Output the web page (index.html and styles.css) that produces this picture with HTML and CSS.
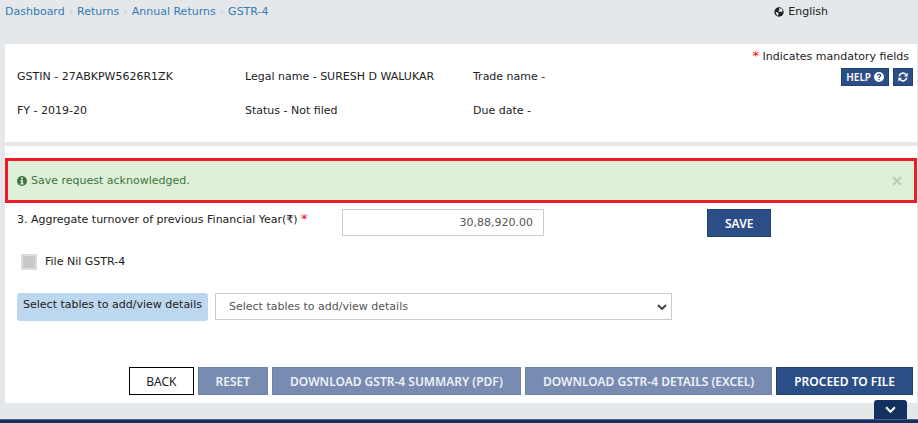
FILE: index.html
```html
<!DOCTYPE html>
<html lang="en">
<head>
    <meta charset="UTF-8">
    <meta name="viewport" content="width=device-width, initial-scale=1.0">
    <title>GSTR-4 Annual Return</title>
    <link rel="stylesheet" href="styles.css">
</head>
<body>
    <header class="topbar">
        <nav class="breadcrumb" aria-label="Breadcrumb">
            <a href="#">Dashboard</a>
            <span class="sep">›</span>
            <a href="#">Returns</a>
            <span class="sep">›</span>
            <a href="#">Annual Returns</a>
            <span class="sep">›</span>
            <a href="#">GSTR-4</a>
        </nav>
        <div class="language">
            <svg class="icon" viewBox="0 0 16 16" aria-hidden="true">
                <circle cx="8" cy="8" r="7.500" fill="#222"/>
                <path d="M8 2l4 0.500 2 3.500-1.500 2-2.500-1-1.500 1-1.500-1.500 1.500-2z" fill="#e4e8ea"/>
                <path d="M2.500 8l3 0.500 2 2-1.500 3.500-1.500-1z" fill="#e4e8ea"/>
            </svg>
            <span>English</span>
        </div>
    </header>

    <main class="content">
        <section class="panel summary">
            <dl class="details">
                <div><dt>GSTIN -</dt> <dd>27ABKPW5626R1ZK</dd></div>
                <div><dt>Legal name -</dt> <dd>SURESH D WALUKAR</dd></div>
                <div><dt>Trade name -</dt> <dd></dd></div>
                <div><dt>FY -</dt> <dd>2019-20</dd></div>
                <div><dt>Status -</dt> <dd>Not filed</dd></div>
                <div><dt>Due date -</dt> <dd></dd></div>
            </dl>
            <div class="summary-side">
                <p class="mandatory"><span class="required">*</span> Indicates mandatory fields</p>
                <div class="tools">
                    <button type="button" class="btn-small">HELP
                        <svg class="icon" viewBox="0 0 16 16" aria-hidden="true">
                            <circle cx="8" cy="8" r="8" fill="#fff"/>
                            <path d="M5.500 6c0-3.500 5-3.500 5-0.500 0 2-2.500 2-2.500 4" fill="none" stroke="#2c4e86" stroke-width="2"/>
                            <path d="M7 11h2v2h-2z" fill="#2c4e86"/>
                        </svg>
                    </button>
                    <button type="button" class="btn-small" aria-label="Refresh">
                        <svg class="icon" viewBox="0 0 16 16" aria-hidden="true">
                            <path d="M2 7a6 6 0 0 1 10.500-3M14 9a6 6 0 0 1-10.500 3" fill="none" stroke="#fff" stroke-width="2.500"/>
                            <path d="M15.500 1v6h-6zM0.500 15v-6h6z" fill="#fff"/>
                        </svg>
                    </button>
                </div>
            </div>
        </section>

        <section class="panel return">
            <div class="alert" role="alert">
                <svg class="icon" viewBox="0 0 16 16" aria-hidden="true">
                    <circle cx="8" cy="8" r="8" fill="#3c763d"/>
                    <path d="M6.500 2.500h3v2.500h-3zM5.500 6.500h4v5h1v2h-5v-2h1v-3h-1z" fill="#dff0d8"/>
                </svg>
                <span class="alert-text">Save request acknowledged.</span>
                <button type="button" class="close" aria-label="Close">
                    <svg viewBox="0 0 10 10" aria-hidden="true">
                        <path d="M1 1l8 8M9 1l-8 8" fill="none" stroke="#b9cfb4" stroke-width="2"/>
                    </svg>
                </button>
            </div>

            <form class="return-form">
                <div class="turnover-row">
                    <label for="turnover">3. Aggregate turnover of previous Financial Year(₹) <span class="required">*</span></label>
                    <input type="text" id="turnover" class="field amount" value="30,88,920.00">
                    <button type="button" class="btn btn-primary save">SAVE</button>
                </div>

                <div class="nil-row">
                    <input type="checkbox" id="nil" class="check" disabled>
                    <label for="nil">File Nil GSTR-4</label>
                </div>

                <div class="tables-row">
                    <label for="tables" class="tables-label">Select tables to add/view details</label>
                    <div class="select-wrap">
                        <select id="tables" class="field">
                            <option>Select tables to add/view details</option>
                        </select>
                        <svg class="chevron" viewBox="0 0 10 6" aria-hidden="true">
                            <path d="M1 1l4 4 4-4" fill="none" stroke="#444" stroke-width="2"/>
                        </svg>
                    </div>
                </div>

                <div class="actions">
                    <button type="button" class="btn btn-default">BACK</button>
                    <button type="button" class="btn btn-primary" disabled>RESET</button>
                    <button type="button" class="btn btn-primary" disabled>DOWNLOAD GSTR-4 SUMMARY (PDF)</button>
                    <button type="button" class="btn btn-primary" disabled>DOWNLOAD GSTR-4 DETAILS (EXCEL)</button>
                    <button type="button" class="btn btn-primary">PROCEED TO FILE</button>
                </div>
            </form>
        </section>
    </main>

    <footer class="footer">
        <button type="button" class="footer-toggle" aria-label="Show footer">
            <svg viewBox="0 0 10 6" aria-hidden="true">
                <path d="M1 1l4 4 4-4" fill="none" stroke="#fff" stroke-width="2"/>
            </svg>
        </button>
    </footer>
</body>
</html>
```

FILE: styles.css
```css
* {
    box-sizing: border-box;
}
body {
    margin: 0;
    background-color: #e4e8ea;
    color: #222;
    font-family: Verdana, "DejaVu Sans", sans-serif;
    font-size: 11px;
    line-height: 16px;
}
a {
    color: #337ab7;
    text-decoration: none;
}
p, dl, dd {
    margin: 0;
}
button, input, select {
    font-family: inherit;
    font-size: 11px;
}
button {
    cursor: pointer;
}
.icon {
    width: 10px;
    height: 10px;
    flex: none;
}
.required {
    color: #f00;
    font-size: 13px;
    line-height: 1;
}
.topbar {
    display: flex;
    justify-content: space-between;
    padding: 4px 90px 24px 5px;
}
.breadcrumb {
    display: flex;
    gap: 4px;
}
.sep {
    color: #c4c8cc;
}
.language {
    display: flex;
    align-items: center;
    gap: 4px;
}
.content {
    display: flex;
    flex-direction: column;
    gap: 4px;
    padding: 0 1px 0 5px;
}
.panel {
    background-color: #fff;
}

/* Taxpayer details */
.summary {
    display: flex;
    justify-content: space-between;
    padding: 5px 4px 23px 12px;
}
.details {
    flex: 1;
    display: grid;
    grid-template-columns: repeat(3, 1fr);
    row-gap: 18px;
    padding-top: 20px;
}
.details dt, .details dd {
    display: inline;
}
.summary-side {
    display: flex;
    flex-direction: column;
    align-items: flex-end;
    width: 212px;
    gap: 3px;
}
.mandatory {
    padding-right: 4px;
}
.tools {
    display: flex;
    gap: 4px;
}
.btn-small {
    display: flex;
    align-items: center;
    gap: 3px;
    height: 18px;
    padding: 0 4px;
    border: 1px solid #234170;
    background-color: #2c4e86;
    color: #fff;
    font-family: "Noto Sans", sans-serif;
    font-size: 10px;
    font-weight: 600;
}

/* Saved message */
.return {
    padding-top: 12px;
}
.alert {
    display: flex;
    align-items: center;
    gap: 4px;
    padding: 12px 9px 11px;
    border: 3px solid #ed1c24;
    background-color: #dff0d8;
    color: #3c763d;
}
.alert-text {
    flex: 1;
}
.close {
    display: flex;
    padding: 0 3px;
    border: none;
    background: none;
}
.close svg {
    width: 10px;
    height: 10px;
}

/* Return form */
.return-form {
    padding: 6px 4px 8px 12px;
}
.field {
    width: 100%;
    height: 27px;
    border: 1px solid #ccc;
    border-radius: 0;
    background-color: #fff;
    color: #555;
}
.turnover-row {
    display: grid;
    grid-template-columns: 325fr 202fr 369fr;
    align-items: start;
}
.turnover-row label {
    padding-top: 3px;
}
.amount {
    padding: 0 10px;
    text-align: right;
}
.save {
    justify-self: start;
    margin-left: 163px;
}
.nil-row {
    display: flex;
    align-items: center;
    gap: 8px;
    margin-top: 17px;
    padding-left: 4px;
}
.check {
    appearance: none;
    width: 16px;
    height: 16px;
    margin: 0;
    border: 2px solid #ddd;
    background-color: #c8c8c8;
}
.tables-row {
    display: flex;
    gap: 7px;
    margin-top: 23px;
}
.tables-label {
    min-width: 191px;
    height: 28px;
    padding: 4px;
    border-radius: 3px;
    background-color: #bdd7ee;
    text-align: center;
    white-space: nowrap;
}
.select-wrap {
    display: grid;
    align-items: center;
    width: 51%;
    height: 27px;
}
.select-wrap .field, .select-wrap .chevron {
    grid-area: 1 / 1;
}
.select-wrap .field {
    appearance: none;
    padding: 0 13px;
}
.chevron {
    justify-self: end;
    width: 10px;
    height: 6px;
    margin-right: 5px;
    pointer-events: none;
}
.btn {
    height: 28px;
    padding: 0 16px;
    border: 1px solid #234170;
    font-family: "Noto Sans", sans-serif;
    font-size: 12px;
    font-weight: 600;
    white-space: nowrap;
}
.btn-primary {
    padding: 0 17px;
    background-color: #2c4e86;
    color: #fff;
}
.btn-primary:disabled {
    border-color: #7083a4;
    background-color: #788cb2;
    color: #eef1f6;
    cursor: default;
}
.btn-default {
    border-color: #000;
    background-color: #fff;
    color: #222;
    font-weight: 400;
}
.actions {
    display: flex;
    justify-content: flex-end;
    gap: 4px;
    margin-top: 46px;
}

/* Footer */
.footer {
    display: flex;
    flex-direction: column;
    align-items: flex-end;
    margin-top: -3px;
}
.footer::after {
    content: "";
    width: 100%;
    height: 4px;
    border-top: 1px solid #48618a;
    background-color: #14305e;
}
.footer-toggle {
    display: flex;
    align-items: center;
    justify-content: center;
    width: 33px;
    height: 19px;
    margin-right: 11px;
    padding: 0;
    border: none;
    border-radius: 3px 3px 0 0;
    background-color: #14305e;
}
.footer-toggle svg {
    width: 11px;
    height: 7px;
}
```
